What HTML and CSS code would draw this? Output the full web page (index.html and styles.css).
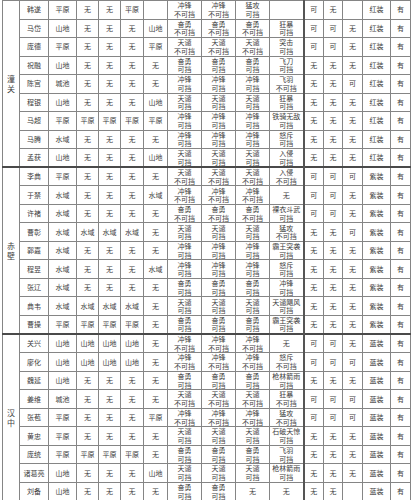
FILE: index.html
```html
<!DOCTYPE html>
<html lang="zh">
<head>
<meta charset="utf-8">
<link rel="stylesheet" href="styles.css">
</head>
<body>
<table class="sheet">
<colgroup>
<col class="w-grp"><col class="w-name"><col class="w-terr"><col class="w-s"><col class="w-s"><col class="w-s2"><col class="w-s3"><col class="w-sk"><col class="w-sk"><col class="w-sk"><col class="w-sk"><col class="w-y"><col class="w-y2"><col class="w-y"><col class="w-eq"><col class="w-y">
</colgroup>
<tbody>
<tr><td class="grp" rowspan="9">潼<br>关</td><td>韩遂</td><td>平原</td><td>无</td><td>无</td><td>平原</td><td></td><td>冲锋<br>不可挡</td><td>冲锋<br>不可挡</td><td>猛攻<br>可挡</td><td></td><td class="sep">可</td><td>无</td><td></td><td>红装</td><td>有</td></tr>
<tr><td>马岱</td><td>山地</td><td>无</td><td>无</td><td>无</td><td>山地</td><td>奋勇<br>不可挡</td><td>奋勇<br>不可挡</td><td>奋勇<br>不可挡</td><td>狂暴<br>可挡</td><td class="sep">可</td><td>可</td><td>无</td><td>红装</td><td>有</td></tr>
<tr><td>庞德</td><td>平原</td><td>无</td><td>无</td><td>无</td><td>平原</td><td>天谴<br>不可挡</td><td>天谴<br>不可挡</td><td>天谴<br>不可挡</td><td>突击<br>可挡</td><td class="sep">可</td><td>可</td><td>无</td><td>红装</td><td>有</td></tr>
<tr><td>祝融</td><td>山地</td><td>无</td><td>无</td><td>无</td><td>无</td><td>奋勇<br>可挡</td><td>奋勇<br>可挡</td><td>奋勇<br>可挡</td><td>飞刀<br>可挡</td><td class="sep">无</td><td>无</td><td>无</td><td>红装</td><td>有</td></tr>
<tr><td>陈宫</td><td>城池</td><td>无</td><td>无</td><td>无</td><td>无</td><td>冲锋<br>可挡</td><td>冲锋<br>可挡</td><td>冲锋<br>可挡</td><td>飞羽<br>不可挡</td><td class="sep">无</td><td>无</td><td>可</td><td>红装</td><td>有</td></tr>
<tr><td>程银</td><td>山地</td><td>无</td><td>无</td><td>无</td><td>山地</td><td>天谴<br>可挡</td><td>天谴<br>可挡</td><td>天谴<br>可挡</td><td>狂暴<br>可挡</td><td class="sep">无</td><td>无</td><td>无</td><td>红装</td><td>有</td></tr>
<tr><td>马超</td><td>平原</td><td>平原</td><td>平原</td><td>平原</td><td>平原</td><td>冲锋<br>可挡</td><td>冲锋<br>可挡</td><td>冲锋<br>可挡</td><td>铁骑无敌<br>可挡</td><td class="sep">无</td><td>无</td><td>无</td><td>红装</td><td>有</td></tr>
<tr><td>马腾</td><td>水域</td><td>无</td><td>无</td><td>无</td><td>无</td><td>冲锋<br>可挡</td><td>冲锋<br>可挡</td><td>冲锋<br>可挡</td><td>怒斥<br>可挡</td><td class="sep">无</td><td>无</td><td>无</td><td>红装</td><td>有</td></tr>
<tr><td>孟获</td><td>山地</td><td>无</td><td>无</td><td>无</td><td>山地</td><td>天谴<br>可挡</td><td>天谴<br>可挡</td><td>天谴<br>可挡</td><td>入侵<br>可挡</td><td class="sep">无</td><td>无</td><td>无</td><td>红装</td><td>有</td></tr>

<tr class="gs"><td class="grp" rowspan="9">赤<br>壁</td><td>李典</td><td>平原</td><td>无</td><td>无</td><td>无</td><td>无</td><td>天谴<br>不可挡</td><td>天谴<br>不可挡</td><td>天谴<br>不可挡</td><td>入侵<br>不可挡</td><td class="sep">可</td><td>可</td><td>可</td><td>紫装</td><td>有</td></tr>
<tr><td>于禁</td><td>水域</td><td>无</td><td>无</td><td>无</td><td>水域</td><td>冲锋<br>不可挡</td><td>冲锋<br>不可挡</td><td>冲锋<br>不可挡</td><td>无</td><td class="sep">可</td><td>可</td><td>无</td><td>紫装</td><td>有</td></tr>
<tr><td>许褚</td><td>水域</td><td>无</td><td>无</td><td>无</td><td>无</td><td>奋勇<br>不可挡</td><td>奋勇<br>不可挡</td><td>奋勇<br>不可挡</td><td>裸衣斗武<br>可挡</td><td class="sep">可</td><td>可</td><td>无</td><td>紫装</td><td>有</td></tr>
<tr><td>曹彰</td><td>水域</td><td>水域</td><td>水域</td><td>水域</td><td>无</td><td>天谴<br>可挡</td><td>天谴<br>可挡</td><td>天谴<br>可挡</td><td>猛攻<br>不可挡</td><td class="sep">无</td><td>无</td><td>可</td><td>紫装</td><td>有</td></tr>
<tr><td>郭嘉</td><td>水域</td><td>无</td><td>无</td><td>无</td><td>无</td><td>冲锋<br>可挡</td><td>冲锋<br>可挡</td><td>冲锋<br>可挡</td><td>霸王突袭<br>可挡</td><td class="sep">无</td><td>无</td><td>无</td><td>紫装</td><td>有</td></tr>
<tr><td>程昱</td><td>水域</td><td>无</td><td>无</td><td>无</td><td>水域</td><td>冲锋<br>可挡</td><td>冲锋<br>可挡</td><td>冲锋<br>可挡</td><td>怒斥<br>可挡</td><td class="sep">无</td><td>无</td><td>无</td><td>紫装</td><td>有</td></tr>
<tr><td>张辽</td><td>水域</td><td>无</td><td>无</td><td>无</td><td>无</td><td>奋勇<br>可挡</td><td>奋勇<br>可挡</td><td>奋勇<br>可挡</td><td>冲锋<br>可挡</td><td class="sep">无</td><td>无</td><td>无</td><td>紫装</td><td>有</td></tr>
<tr><td>典韦</td><td>水域</td><td>水域</td><td>水域</td><td>水域</td><td>无</td><td>天谴<br>可挡</td><td>天谴<br>可挡</td><td>天谴<br>可挡</td><td>天谴飓风<br>可挡</td><td class="sep">无</td><td>无</td><td>无</td><td>紫装</td><td>有</td></tr>
<tr><td>曹操</td><td>平原</td><td>平原</td><td>平原</td><td>平原</td><td>无</td><td>奋勇<br>可挡</td><td>奋勇<br>可挡</td><td>奋勇<br>可挡</td><td>霸王突袭<br>可挡</td><td class="sep">无</td><td>无</td><td>无</td><td>紫装</td><td>有</td></tr>

<tr class="gs"><td class="grp" rowspan="9">汉<br>中</td><td>关兴</td><td>山地</td><td>山地</td><td>山地</td><td>山地</td><td>无</td><td>冲锋<br>不可挡</td><td>冲锋<br>不可挡</td><td>冲锋<br>不可挡</td><td>无</td><td class="sep">可</td><td>可</td><td>无</td><td>蓝装</td><td>有</td></tr>
<tr><td>廖化</td><td>山地</td><td>山地</td><td>山地</td><td>山地</td><td>无</td><td>冲锋<br>不可挡</td><td>冲锋<br>不可挡</td><td>冲锋<br>不可挡</td><td>怒斥<br>不可挡</td><td class="sep">可</td><td>可</td><td>可</td><td>蓝装</td><td>有</td></tr>
<tr><td>魏延</td><td>山地</td><td>无</td><td>无</td><td>无</td><td>无</td><td>奋勇<br>可挡</td><td>奋勇<br>可挡</td><td>奋勇<br>可挡</td><td>枪林箭雨<br>可挡</td><td class="sep">无</td><td>无</td><td>无</td><td>蓝装</td><td>有</td></tr>
<tr><td>姜维</td><td>城池</td><td>无</td><td>无</td><td>无</td><td>无</td><td>天谴<br>不可挡</td><td>天谴<br>不可挡</td><td>天谴<br>不可挡</td><td>狂暴<br>不可挡</td><td class="sep">可</td><td>可</td><td>可</td><td>蓝装</td><td>有</td></tr>
<tr><td>张苞</td><td>平原</td><td>无</td><td>无</td><td>无</td><td>平原</td><td>冲锋<br>不可挡</td><td>冲锋<br>不可挡</td><td>冲锋<br>不可挡</td><td>猛攻<br>不可挡</td><td class="sep">可</td><td>可</td><td>可</td><td>蓝装</td><td>有</td></tr>
<tr><td>黄忠</td><td>平原</td><td>无</td><td>无</td><td>无</td><td>无</td><td>天谴<br>可挡</td><td>天谴<br>可挡</td><td>天谴<br>可挡</td><td>石破天惊<br>可挡</td><td class="sep">无</td><td>无</td><td>无</td><td>蓝装</td><td>有</td></tr>
<tr><td>庞统</td><td>平原</td><td>平原</td><td>平原</td><td>平原</td><td>无</td><td>奋勇<br>可挡</td><td>奋勇<br>可挡</td><td>奋勇<br>可挡</td><td>飞羽<br>可挡</td><td class="sep">无</td><td>无</td><td>无</td><td>蓝装</td><td>有</td></tr>
<tr><td>诸葛亮</td><td>山地</td><td>无</td><td>无</td><td>无</td><td>山地</td><td>天谴<br>可挡</td><td>天谴<br>可挡</td><td>天谴<br>可挡</td><td>枪林箭雨<br>可挡</td><td class="sep">无</td><td>无</td><td>无</td><td>蓝装</td><td>有</td></tr>
<tr><td>刘备</td><td>山地</td><td>无</td><td>无</td><td>无</td><td>无</td><td>奋勇<br>可挡</td><td>奋勇<br>可挡</td><td>无</td><td>无</td><td class="sep">无</td><td>无</td><td></td><td>蓝装</td><td>有</td></tr>
</tbody>
</table>
</body>
</html>
```

FILE: styles.css
```css
html, body {
  margin: 0;
  padding: 0;
  background: #ffffff;
}

body {
  font-family: "Noto Sans CJK SC", "Noto Sans CJK JP", sans-serif;
}

.sheet {
  border-collapse: collapse;
  table-layout: fixed;
  width: 408px;
  margin: 0 0 0 2px;
  color: #3c3c3c;
  font-size: 7px;
}

.w-grp { width: 17px; }
.w-name { width: 29px; }
.w-terr { width: 28px; }
.w-s { width: 22px; }
.w-s2 { width: 23px; }
.w-s3 { width: 24px; }
.w-sk { width: 34px; }
.w-y { width: 20px; }
.w-y2 { width: 19px; }
.w-eq { width: 28px; }

.sheet tr {
  height: 18.5px;
}

.sheet td {
  border: 1px solid #858585;
  padding: 0;
  text-align: center;
  vertical-align: middle;
  line-height: 8.6px;
  white-space: nowrap;
  overflow: hidden;
}

.sheet tr.gs td {
  border-top: 2px solid #4a4a4a;
}

.sheet td.sep {
  border-left: 2px solid #555555;
}

.sheet td.grp {
  font-size: 8px;
  line-height: 10px;
  color: #444444;
}
```
